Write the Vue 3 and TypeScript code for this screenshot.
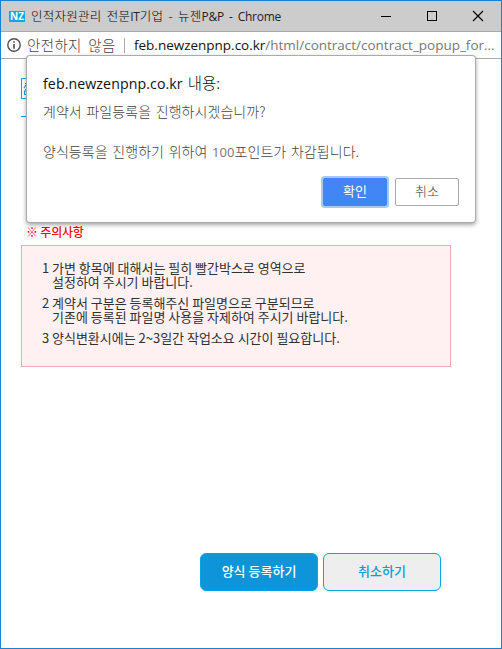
<script setup lang="ts">
interface Note {
  id: number
  lines: string[]
}

const notes: Note[] = [
  { id: 1, lines: ['가변 항목에 대해서는 필히 빨간박스로 영역으로', '설정하여 주시기 바랍니다.'] },
  { id: 2, lines: ['계약서 구분은 등록해주신 파일명으로 구분되므로', '기존에 등록된 파일명 사용을 자제하여 주시기 바랍니다.'] },
  { id: 3, lines: ['양식변환시에는 2~3일간 작업소요 시간이 필요합니다.'] },
]
</script>

<template>
  <div class="window">
    <header class="titlebar">
      <span class="favicon">NZ</span>
      <span class="title">인적자원관리 전문<span class="latin">IT</span>기업 - 뉴젠<span class="latin">P&amp;P - Chrome</span></span>
      <svg class="controls" width="104" height="12" viewBox="0 0 104 12" fill="none" stroke="#000">
        <path d="M0 6.500H10" />
        <rect x="46.5" y="1.5" width="9" height="9" />
        <path d="M92 1L102 11M102 1L92 11" stroke-width="1.2" />
      </svg>
    </header>
    <div class="addressbar">
      <svg class="info" width="14" height="14" viewBox="0 0 14 14">
        <circle cx="7" cy="7" r="6.2" fill="none" stroke="#505050" stroke-width="1.4" />
        <path d="M6.2 3.2h1.6v1.6H6.2zM6.2 6h1.6v4.8H6.2z" fill="#505050" />
      </svg>
      <span class="insecure">안전하지 않음</span>
      <span class="divider"></span>
      <span class="url"><span class="host">feb.newzenpnp.co.kr</span><span class="path">/html/contract/contract_popup_for...</span></span>
    </div>
    <main class="page">
      <div class="heading">
        <svg width="22" height="22" viewBox="0 0 22 22" fill="none" stroke="#16a0dc">
          <rect x=".5" y=".5" width="20" height="20" />
          <path d="M4 5.500h4M6 5.500L3 10M6 6.500L8 10M4 11.500h4M3.500 16.500v-3.500h4v3.500z" stroke-width="1.1" />
        </svg>
      </div>
      <h2 class="caution">※ 주의사항</h2>
      <section class="notes">
        <div v-for="note in notes" :key="note.id" class="note">
          <span class="num">{{ note.id }}</span>
          <div>
            <div v-for="line in note.lines" :key="line" class="line">{{ line }}</div>
          </div>
        </div>
      </section>
      <div class="actions">
        <button class="action primary">양식 등록하기</button>
        <button class="action">취소하기</button>
      </div>
    </main>
    <div class="dialog" role="dialog">
      <div class="origin"><span class="origin-host">feb.newzenpnp.co.kr</span> 내용:</div>
      <p class="message">계약서 파일등록을 진행하시겠습니까?</p>
      <p class="message second">양식등록을 진행하기 위하여 <span class="points">100</span>포인트가 차감됩니다.</p>
      <div class="buttons">
        <button class="btn ok">확인</button>
        <button class="btn">취소</button>
      </div>
    </div>
  </div>
</template>

<style>
body {
  margin: 0;
}
</style>

<style scoped>
* {
  box-sizing: border-box;
}
.window {
  position: relative;
  width: 502px;
  height: 649px;
  border: 1px solid #1a80d2;
  background: #fff;
  overflow: hidden;
  font-family: "Noto Sans CJK KR", sans-serif;
  white-space: nowrap;
}
button {
  font-family: inherit;
  padding: 0;
}
.titlebar {
  display: flex;
  align-items: center;
  height: 31px;
  padding: 0 16px 0 8px;
  background: #ccc;
  border-bottom: 1px solid #a8a8a8;
}
.favicon {
  width: 16px;
  height: 11px;
  background: #12a5e5;
  color: #fff;
  font: bold 10px/11px "Open Sans", sans-serif;
  text-align: center;
}
.title {
  margin-left: 6px;
  font-size: 12.5px;
  font-weight: 300;
  line-height: 20px;
  letter-spacing: 0.25px;
  word-spacing: 2.2px;
  color: #000;
}
.latin {
  font-family: "Open Sans", sans-serif;
  font-size: 12px;
  font-weight: 400;
  letter-spacing: -0.25px;
  color: #222;
}
.controls {
  flex: none;
  width: 104px;
  margin-left: auto;
}
.addressbar {
  display: flex;
  align-items: center;
  height: 27px;
  padding: 0 6px;
  border-bottom: 1px solid #a8a8a8;
}
.info {
  flex: none;
}
.insecure {
  width: 90px;
  margin-left: 6px;
  font-size: 14.5px;
  font-weight: 300;
  line-height: 20px;
  letter-spacing: 0.35px;
  word-spacing: 3px;
  color: #444;
}
.divider {
  width: 1px;
  height: 15px;
  margin: 0 9px 0 7px;
  background: #aaa;
}
.url {
  font-family: "Open Sans", sans-serif;
  font-size: 13.5px;
  line-height: 20px;
  letter-spacing: -0.01px;
  color: #111;
}
.path {
  color: #777;
}
.page {
  padding: 19px 50px 0 20px;
}
.heading {
  width: 430px;
  height: 39px;
  border-bottom: 1px solid #16a0dc;
}
.caution {
  margin: 107px 0 0 5px;
  font-size: 12px;
  font-weight: 500;
  line-height: 16px;
  letter-spacing: -0.2px;
  color: #f00;
}
.notes {
  display: flex;
  flex-direction: column;
  gap: 7px;
  width: 430px;
  height: 122px;
  margin-top: 5px;
  padding: 15px 20px 0;
  background: #fff1f1;
  border: 1px solid #e8b0b0;
}
.note {
  display: flex;
  font-size: 13px;
  line-height: 14px;
  letter-spacing: -0.01px;
  color: #303030;
}
.num {
  width: 10px;
}
.actions {
  display: flex;
  gap: 5px;
  margin: 186px 0 0 179px;
}
.action {
  width: 118px;
  height: 38px;
  padding-bottom: 2px;
  border: 1px solid #05a8e5;
  border-radius: 6px;
  background: #eee;
  color: #0a9cdc;
  font-size: 13px;
  font-weight: 500;
  line-height: 18px;
}
.action.primary {
  background: #0e94d8;
  color: #fff;
}
.dialog {
  position: absolute;
  left: 26px;
  top: 55px;
  width: 448px;
  height: 166px;
  padding: 16px 16px 0;
  background: #fff;
  border-radius: 3px;
  box-shadow: 0 0 0 1px #aaa, 0 2px 4px 1px rgba(0, 0, 0, 0.35);
}
.origin {
  font-size: 15.5px;
  font-weight: 300;
  line-height: 20px;
  word-spacing: 1.5px;
  color: #111;
}
.origin-host {
  font-family: "Open Sans", sans-serif;
  font-size: 14.2px;
  font-weight: 400;
  letter-spacing: 0.08px;
}
.message {
  margin: 7px 0 0;
  font-size: 14px;
  font-weight: 300;
  line-height: 20px;
  letter-spacing: 0.05px;
  word-spacing: 1.5px;
  color: #444;
}
.second {
  margin-top: 20px;
}
.points {
  font-family: "Open Sans", sans-serif;
  font-size: 13px;
  font-weight: 400;
  color: #777;
}
.buttons {
  display: flex;
  justify-content: flex-end;
  gap: 8px;
  margin-top: 16px;
}
.btn {
  width: 64px;
  height: 28px;
  padding-bottom: 2px;
  border: 1px solid #aaa;
  border-radius: 2px;
  background: #fff;
  color: #444;
  font-size: 13px;
  font-weight: 300;
  line-height: 16px;
}
.btn.ok {
  border-color: #4285f4;
  background: #4285f4;
  color: #fff;
  font-weight: 400;
  box-shadow: 0 0 0 2px #a9c6fb;
}
</style>
